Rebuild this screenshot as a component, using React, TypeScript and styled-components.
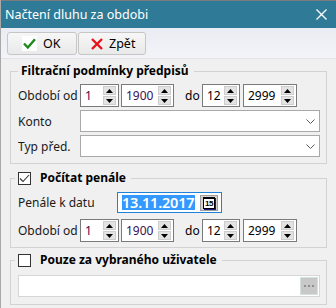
import React from "react";
import styled, { createGlobalStyle } from "styled-components";

const GlobalStyle = createGlobalStyle`
  * { box-sizing: border-box; }
  html, body { margin: 0; padding: 0; }
  body {
    background: #f0f0f0;
    font-family: "Noto Sans", "Open Sans", sans-serif;
    font-size: 12px;
    color: #000;
  }
`;

const Window = styled.div`
  width: 336px;
  height: 308px;
  background: #f0f0f0;
  border-left: 1px solid #a8a8a8;
  overflow: hidden;
  display: flex;
  flex-direction: column;
`;

const TitleBar = styled.div`
  height: 28px;
  flex-shrink: 0;
  background: #2f7b97;
  border-top: 1px solid #7c7c7c;
  display: flex;
  align-items: center;
  justify-content: space-between;
  padding: 0 9px 0 4px;
  color: #fff;
  font-size: 12.5px;
`;

const Toolbar = styled.div`
  height: 31px;
  flex-shrink: 0;
  display: flex;
  gap: 1px;
  padding: 4px 0 0 6px;
  background: linear-gradient(#eaecf3, #f3f4f8);
  border-bottom: 1px solid #e2e2e2;
`;

const ToolButton = styled.button<{ $w: number; $pad: number; $gap: number }>`
  width: ${(p) => p.$w}px;
  height: 23px;
  display: flex;
  align-items: center;
  gap: ${(p) => p.$gap}px;
  padding: 0 0 0 ${(p) => p.$pad}px;
  border: 1px solid #c6c6c6;
  border-radius: 3px;
  background: linear-gradient(#f7f7f7, #e9e9e9);
  font-family: inherit;
  font-size: 12.5px;
  color: #000;
`;

const IconBox = styled.span<{ $white?: boolean }>`
  width: 15px;
  height: 15px;
  display: flex;
  align-items: center;
  justify-content: center;
  background: ${(p) => (p.$white ? "#fff" : "transparent")};
`;

const Body = styled.div`
  padding: 4px 0 0 9px;
  display: flex;
  flex-direction: column;
`;

const Group = styled.fieldset<{ $top: number; $pt: number; $pb: number }>`
  width: 317px;
  margin: ${(p) => p.$top}px 0 0 0;
  padding: ${(p) => p.$pt}px 6px ${(p) => p.$pb}px 7px;
  border: 1px solid #d3d3d3;
  min-width: 0;
`;

const Legend = styled.legend<{ $check?: boolean }>`
  height: 16px;
  line-height: 16px;
  padding: 0 5px 0 3px;
  margin-left: ${(p) => (p.$check ? -3 : 0)}px;
  display: flex;
  align-items: center;
  gap: 9px;
  font-weight: bold;
  font-size: 12px;
  color: #000;
`;

const Rows = styled.div<{ $gap: number }>`
  display: flex;
  flex-direction: column;
  gap: ${(p) => p.$gap}px;
`;

const Row = styled.div<{ $h: number }>`
  height: ${(p) => p.$h}px;
  display: flex;
  align-items: center;
`;

const Label = styled.span<{ $w: number }>`
  width: ${(p) => p.$w}px;
  flex-shrink: 0;
  color: #1a1a1a;
`;

const DoLabel = styled.span`
  width: 28px;
  padding-left: 11px;
  flex-shrink: 0;
`;

const Spin = styled.div<{ $w: number; $ml: number }>`
  width: ${(p) => p.$w}px;
  height: 23px;
  margin-left: ${(p) => p.$ml}px;
  border: 1px solid #7a7a7a;
  background: #fff;
  display: flex;
  align-items: stretch;
`;

const SpinValue = styled.span<{ $color: string }>`
  flex: 1;
  display: flex;
  align-items: center;
  padding-left: 4px;
  color: ${(p) => p.$color};
`;

const SpinButtons = styled.div`
  width: 13px;
  margin: 1px 2px 1px 0;
  display: flex;
  flex-direction: column;
  gap: 1px;
`;

const SpinHalf = styled.div`
  flex: 1;
  background: #e3e3e3;
  border: 1px solid #cdcdcd;
  display: flex;
  align-items: center;
  justify-content: center;
`;

const Combo = styled.div`
  width: 240px;
  height: 22px;
  border: 1px solid #a9a9a9;
  background: #fff;
  display: flex;
  align-items: center;
  justify-content: flex-end;
  padding-right: 4px;
`;

const DateBox = styled.div`
  width: 105px;
  height: 21px;
  border: 1px solid #1e82d8;
  background: #fff;
  display: flex;
  align-items: center;
  padding-left: 4px;
`;

const Selected = styled.span`
  background: #3399ff;
  color: #fff;
  font-size: 14.5px;
  line-height: 15px;
  font-weight: 600;
  letter-spacing: -0.2px;
  width: 73px;
`;

const CalButton = styled.div`
  width: 18px;
  height: 16px;
  margin-left: 5px;
  background: #d3d3d3;
  border: 1px solid #9e9e9e;
  display: flex;
  align-items: center;
  justify-content: center;
`;

const CalIcon = styled.span`
  width: 12px;
  height: 12px;
  border: 1px solid #000;
  border-top-width: 2px;
  box-shadow: 1px 1px 0 #1a1a80;
  background: #fff;
  color: #000;
  font-size: 8px;
  line-height: 9px;
  font-weight: bold;
  text-align: center;
  letter-spacing: -0.5px;
  font-family: "Liberation Sans", sans-serif;
`;

const CheckBox = styled.span`
  width: 13px;
  height: 13px;
  border: 1px solid #333;
  background: #fff;
  display: flex;
  align-items: center;
  justify-content: center;
  flex-shrink: 0;
`;

const UserInput = styled.div`
  width: 302px;
  height: 22px;
  border: 1px solid #d6d6d6;
  background: #fff;
  display: flex;
  justify-content: flex-end;
  align-items: center;
  padding-right: 1px;
`;

const DotsButton = styled.div`
  width: 18px;
  height: 18px;
  background: #c8c8c8;
  border: 1px solid #d4e2de;
  display: flex;
  align-items: center;
  justify-content: center;
  gap: 2px;
`;

const Dot = styled.span`
  width: 2px;
  height: 2px;
  background: #8e8e8e;
`;

const Arrow = ({ up }: { up?: boolean }) => (
  <svg width="7" height="4" viewBox="0 0 7 4">
    <path d={up ? "M0 4 L3.5 0 L7 4 Z" : "M0 0 L3.5 4 L7 0 Z"} fill="#000" />
  </svg>
);

const SpinBox = ({ w, ml, value, color }: { w: number; ml: number; value: string; color: string }) => (
  <Spin $w={w} $ml={ml}>
    <SpinValue $color={color}>{value}</SpinValue>
    <SpinButtons>
      <SpinHalf>
        <Arrow up />
      </SpinHalf>
      <SpinHalf>
        <Arrow />
      </SpinHalf>
    </SpinButtons>
  </Spin>
);

const Chevron = () => (
  <svg width="9" height="5" viewBox="0 0 9 5">
    <path d="M0.5 0.5 L4.5 4.5 L8.5 0.5" fill="none" stroke="#5a5a5a" strokeWidth="1" />
  </svg>
);

const PeriodRow = ({ from, fromY }: { from: string; fromY: string }) => (
  <Row $h={23}>
    <Label $w={62}>Období od</Label>
    <SpinBox w={39} ml={0} value={from} color="#3b0f4f" />
    <SpinBox w={53} ml={2} value={fromY} color="#3b0f4f" />
    <DoLabel>do</DoLabel>
    <SpinBox w={38} ml={0} value="12" color="#000" />
    <SpinBox w={54} ml={3} value="2999" color="#000" />
  </Row>
);

export default function App() {
  return (
    <>
      <GlobalStyle />
      <Window>
        <TitleBar>
          <span>Načtení dluhu za obdobi</span>
          <svg width="11" height="11" viewBox="0 0 11 11">
            <path d="M0.5 0.5 L10.5 10.5 M10.5 0.5 L0.5 10.5" stroke="#fff" strokeWidth="1.3" />
          </svg>
        </TitleBar>
        <Toolbar>
          <ToolButton $w={70} $pad={14} $gap={6}>
            <IconBox $white>
              <svg width="13" height="11" viewBox="0 0 13 11">
                <path d="M1 5.5 L4.8 9.5 L12 1.2" fill="none" stroke="#1e8a1e" strokeWidth="2.4" />
              </svg>
            </IconBox>
            OK
          </ToolButton>
          <ToolButton $w={68} $pad={10} $gap={5}>
            <IconBox>
              <svg width="12" height="12" viewBox="0 0 12 12">
                <path d="M1 1 L11 11 M11 1 L1 11" stroke="#e8141b" strokeWidth="2.4" />
              </svg>
            </IconBox>
            Zpět
          </ToolButton>
        </Toolbar>
        <Body>
          <Group $top={0} $pt={5} $pb={6}>
            <Legend>Filtrační podmínky předpisů</Legend>
            <Rows $gap={3}>
              <PeriodRow from="1" fromY="1900" />
              <Row $h={22}>
                <Label $w={62}>Konto</Label>
                <Combo>
                  <Chevron />
                </Combo>
              </Row>
              <Row $h={22}>
                <Label $w={62}>Typ před.</Label>
                <Combo>
                  <Chevron />
                </Combo>
              </Row>
            </Rows>
          </Group>
          <Group $top={6} $pt={6} $pb={5}>
            <Legend $check>
              <CheckBox>
                <svg width="11" height="9" viewBox="0 0 11 9">
                  <path d="M1 4.5 L4 7.5 L10 1" fill="none" stroke="#333" strokeWidth="1.1" />
                </svg>
              </CheckBox>
              Počítat penále
            </Legend>
            <Rows $gap={6}>
              <Row $h={21}>
                <Label $w={99}>Penále k datu</Label>
                <DateBox>
                  <Selected>13.11.2017</Selected>
                  <CalButton>
                    <CalIcon>15</CalIcon>
                  </CalButton>
                </DateBox>
              </Row>
              <PeriodRow from="1" fromY="1900" />
            </Rows>
          </Group>
          <Group $top={4} $pt={7} $pb={7}>
            <Legend $check>
              <CheckBox />
              Pouze za vybraného uživatele
            </Legend>
            <UserInput>
              <DotsButton>
                <Dot />
                <Dot />
                <Dot />
              </DotsButton>
            </UserInput>
          </Group>
        </Body>
      </Window>
    </>
  );
}
